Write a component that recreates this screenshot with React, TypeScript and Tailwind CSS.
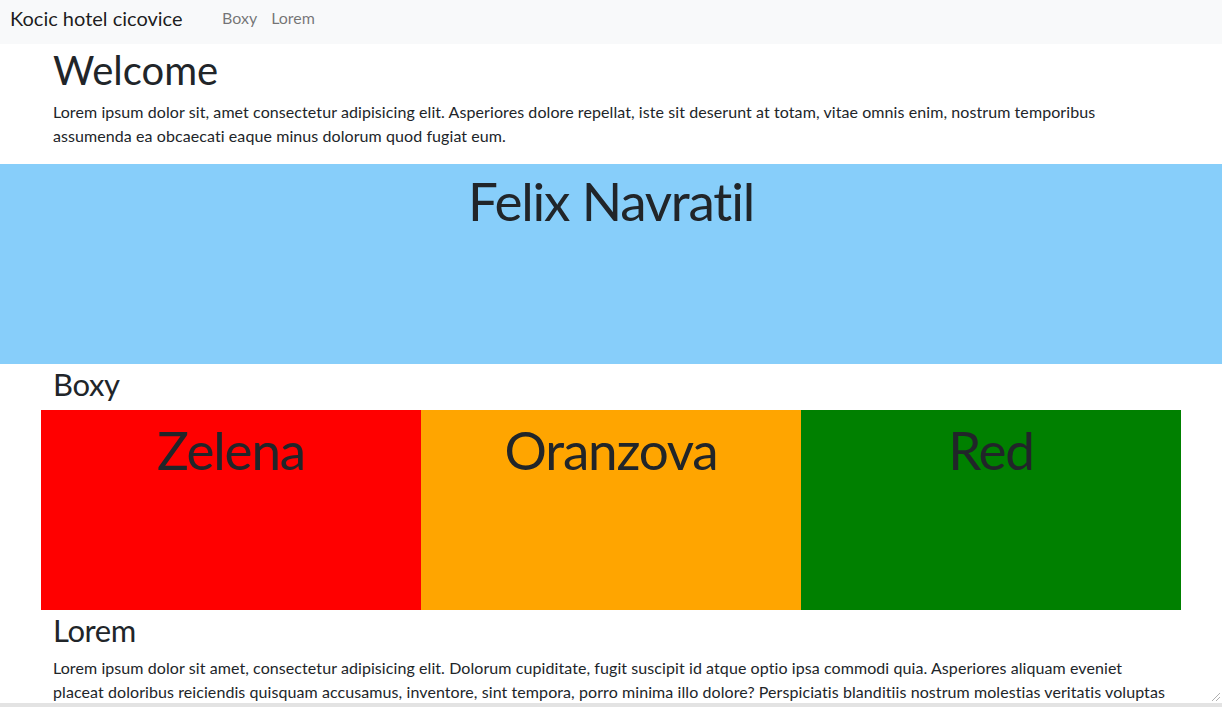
import React from "react";

const font = { fontFamily: "Lato, 'Noto Sans', sans-serif" };

export default function App() {
  return (
    <div className="min-h-screen bg-white text-[#212529]" style={font}>
      <nav className="h-[44px] bg-[#f8f9fa] flex items-start pt-[3px] pl-[10px]">
        <a className="w-[212px] text-[20px] leading-[30px] text-[rgba(0,0,0,0.9)]">Kocic hotel cicovice</a>
        <div className="flex gap-[14px] text-[16px] leading-[30px] text-[rgba(0,0,0,0.55)]">
          <a>Boxy</a>
          <a>Lorem</a>
        </div>
      </nav>

      <div className="w-[1140px] mx-auto px-3">
        <h1 className="text-[40px] leading-[48px] pt-[2px] mb-[6px]">Welcome</h1>
        <p className="text-[16px] leading-[1.5] tracking-[0.08px] mb-4">
          Lorem ipsum dolor sit, amet consectetur adipisicing elit. Asperiores dolore repellat, iste sit deserunt at totam, vitae omnis enim, nostrum temporibus assumenda ea obcaecati eaque minus dolorum quod fugiat eum.
        </p>
      </div>

      <section className="h-[200px] bg-[#87cefa]">
        <h1 className="text-[53px] leading-[1.2] tracking-[-1.2px] pt-[5px] text-center">Felix Navratil</h1>
      </section>

      <div className="w-[1140px] mx-auto px-3">
        <h2 className="text-[31px] leading-[36px] tracking-[-0.4px] pt-[2px] mb-2">Boxy</h2>
      </div>

      <div className="w-[1140px] mx-auto grid grid-cols-3">
        <div className="h-[200px] bg-[#ff0000] text-center">
          <h1 className="text-[53px] leading-[1.2] tracking-[-1.2px] pt-[8px]">Zelena</h1>
        </div>
        <div className="h-[200px] bg-[#ffa500] text-center">
          <h1 className="text-[53px] leading-[1.2] tracking-[-1.2px] pt-[8px]">Oranzova</h1>
        </div>
        <div className="h-[200px] bg-[#008000] text-center">
          <h1 className="text-[53px] leading-[1.2] tracking-[-1.2px] pt-[8px]">Red</h1>
        </div>
      </div>

      <div className="w-[1140px] mx-auto px-3">
        <h2 className="text-[31px] leading-[36px] tracking-[-0.4px] pt-[2px] mb-2">Lorem</h2>
        <p className="text-[16px] leading-[1.5] tracking-[0.08px] mb-4">
          Lorem ipsum dolor sit amet, consectetur adipisicing elit. Dolorum cupiditate, fugit suscipit id atque optio ipsa commodi quia. Asperiores aliquam eveniet placeat doloribus reiciendis quisquam accusamus, inventore, sint tempora, porro minima illo dolore? Perspiciatis blanditiis nostrum molestias veritatis voluptas quibusdam, accusantium ratione corporis aperiam dolores minus sequi eius voluptatibus. Quas, dolorum nam, fugiat eligendi repudiandae iure enim sapiente incidunt, obcaecati modi at odio harum.
        </p>
      </div>

      <div className="fixed left-0 right-0 bottom-0 h-[4px] bg-[#e3e3e3]" />
      <svg className="fixed right-[1px] bottom-[5px]" width="11" height="11" viewBox="0 0 11 11">
        <path d="M10 2 L2 10 M10 6 L6 10" stroke="#b0b0b0" strokeWidth="1" />
      </svg>
    </div>
  );
}
